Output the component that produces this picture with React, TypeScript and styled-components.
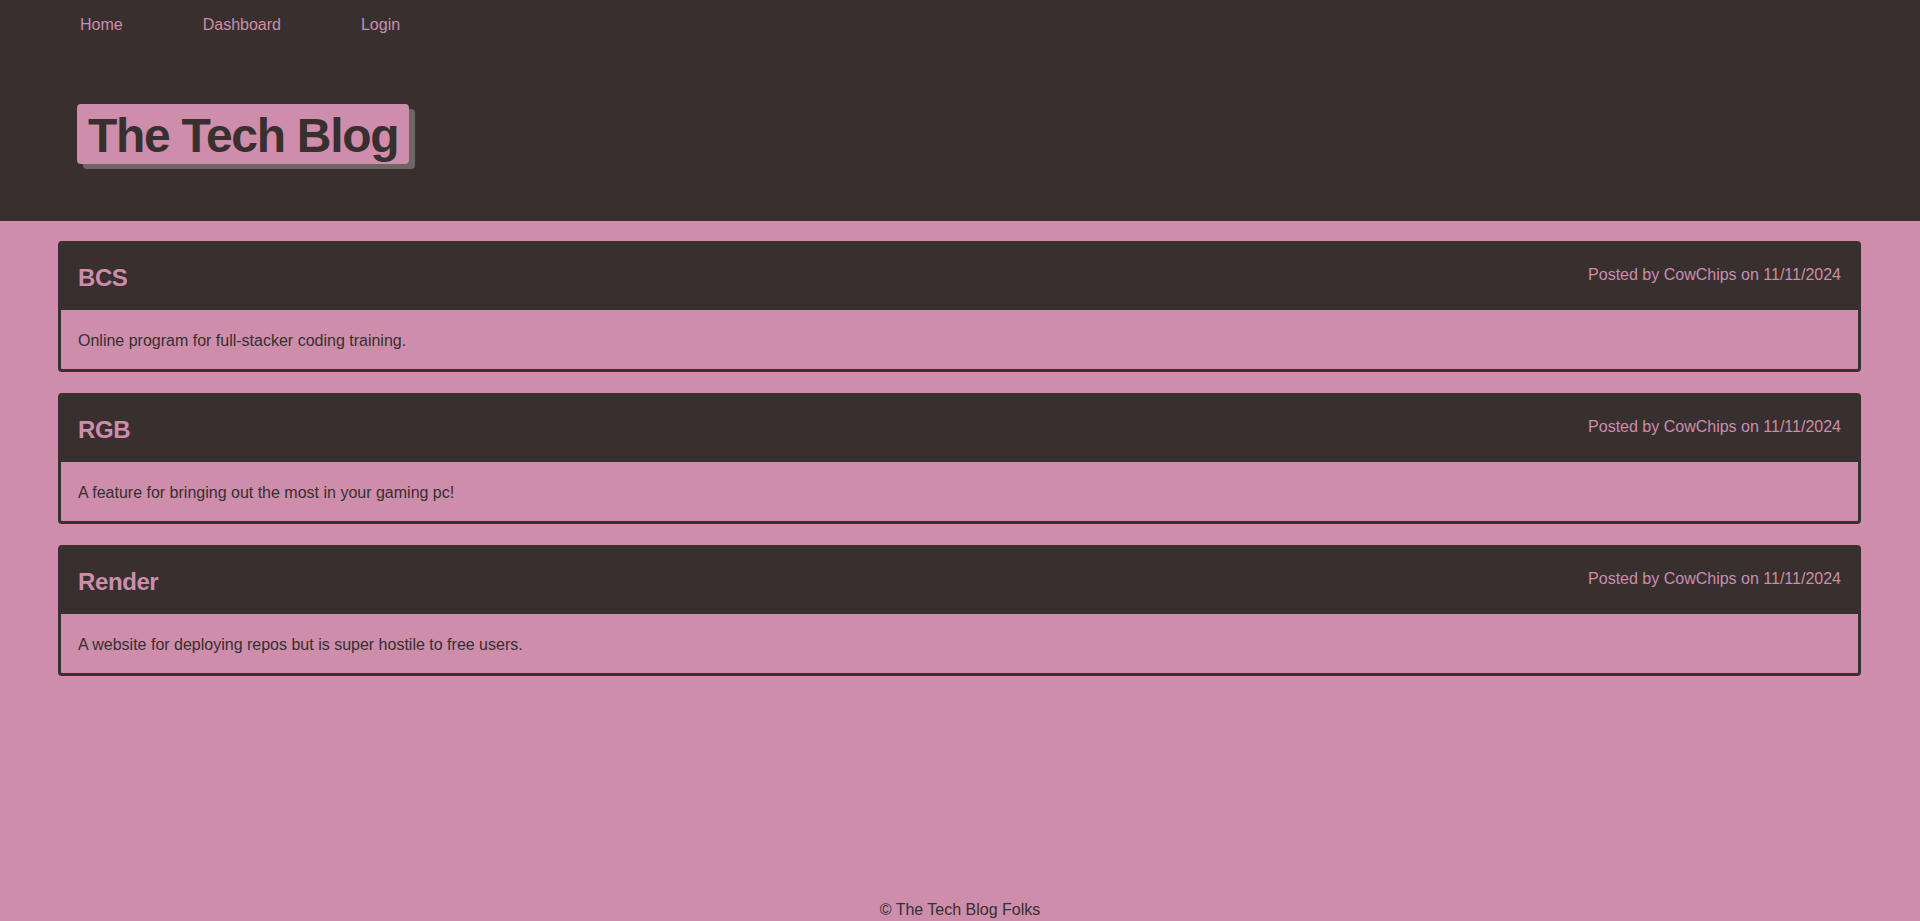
import React from "react";
import styled, { createGlobalStyle } from "styled-components";

const DARK = "#382f2f";
const PINK = "#cd8dab";
const SHADOW = "#6e6565";

const GlobalStyle = createGlobalStyle`
  html, body {
    margin: 0;
    padding: 0;
    background: ${PINK};
    font-family: "Liberation Sans", Arial, sans-serif;
    color: ${DARK};
  }
  * { box-sizing: border-box; }
`;

const Page = styled.div`
  min-height: 100vh;
  display: flex;
  flex-direction: column;
`;

const Header = styled.header`
  background: ${DARK};
  height: 221px;
  display: flex;
  flex-direction: column;
`;

const Nav = styled.nav`
  display: flex;
  padding: 13px 0 0 40px;
`;

const NavLink = styled.a`
  color: ${PINK};
  text-decoration: none;
  font-size: 16px;
  line-height: 24px;
  margin: 0 40px;
`;

const TitleWrap = styled.div`
  padding: 67px 0 0 77px;
`;

const Title = styled.h1`
  display: inline-block;
  margin: 0;
  background: ${PINK};
  color: ${DARK};
  font-size: 48px;
  font-weight: 700;
  letter-spacing: -1.3px;
  line-height: 56px;
  height: 60px;
  padding: 4px 11px 0;
  border-radius: 4px;
  box-shadow: 6px 5px 0 ${SHADOW};
`;

const Main = styled.main`
  flex: 1;
  display: flex;
  flex-direction: column;
  gap: 21px;
  padding: 20px 59px 20px 58px;
`;

const Card = styled.article`
  border: 3px solid ${DARK};
  border-radius: 4px;
  overflow: hidden;
`;

const CardHeader = styled.div`
  background: ${DARK};
  height: 66px;
  display: flex;
  align-items: center;
  justify-content: space-between;
  padding: 2px 17px 0 17px;
`;

const CardTitle = styled.h2`
  margin: 0;
  color: ${PINK};
  font-size: 24px;
  font-weight: 700;
  letter-spacing: -0.4px;
  line-height: 30px;
`;

const Meta = styled.span`
  color: ${PINK};
  font-size: 16px;
  line-height: 24px;
  margin-top: -6px;
`;

const CardBody = styled.p`
  margin: 0;
  height: 59px;
  display: flex;
  align-items: center;
  padding: 2px 17px 0;
  font-size: 16px;
  color: ${DARK};
`;

const Footer = styled.footer`
  text-align: center;
  font-size: 16px;
  line-height: 22px;
  color: ${DARK};
`;

const posts = [
  { title: "BCS", body: "Online program for full-stacker coding training." },
  { title: "RGB", body: "A feature for bringing out the most in your gaming pc!" },
  { title: "Render", body: "A website for deploying repos but is super hostile to free users." },
];

export default function App() {
  return (
    <>
      <GlobalStyle />
      <Page>
        <Header>
          <Nav>
            <NavLink href="#">Home</NavLink>
            <NavLink href="#">Dashboard</NavLink>
            <NavLink href="#">Login</NavLink>
          </Nav>
          <TitleWrap>
            <Title>The Tech Blog</Title>
          </TitleWrap>
        </Header>
        <Main>
          {posts.map((p) => (
            <Card key={p.title}>
              <CardHeader>
                <CardTitle>{p.title}</CardTitle>
                <Meta>Posted by CowChips on 11/11/2024</Meta>
              </CardHeader>
              <CardBody>{p.body}</CardBody>
            </Card>
          ))}
        </Main>
        <Footer>© The Tech Blog Folks</Footer>
      </Page>
    </>
  );
}
